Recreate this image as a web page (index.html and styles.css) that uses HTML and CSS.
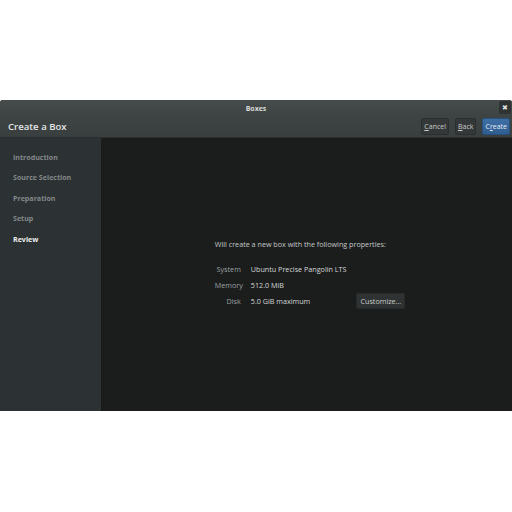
FILE: index.html
```html
<!DOCTYPE html>
<html>
<head>
<meta charset="utf-8">
<link rel="stylesheet" href="styles.css">
</head>
<body>
<div class="page">
  <div class="window">
    <div class="titlebar">
      <span class="title">Boxes</span>
      <span class="close">&#x2716;</span>
    </div>
    <div class="header">
      <span class="header-title">Create a Box</span>
      <div class="actions">
        <button class="btn"><u>C</u>ancel</button>
        <button class="btn"><u>B</u>ack</button>
        <button class="btn primary">C<u>r</u>eate</button>
      </div>
    </div>
    <div class="main">
      <nav class="sidebar">
        <div class="step">Introduction</div>
        <div class="step">Source Selection</div>
        <div class="step">Preparation</div>
        <div class="step">Setup</div>
        <div class="step active">Review</div>
      </nav>
      <section class="content">
        <div class="summary">
          <p class="intro">Will create a new box with the following properties:</p>
          <div class="props">
            <span class="label">System</span><span class="value">Ubuntu Precise Pangolin LTS</span><span></span>
            <span class="label">Memory</span><span class="value">512.0 MiB</span><span></span>
            <span class="label">Disk</span><span class="value">5.0 GiB maximum</span><button class="btn small">Customize…</button>
          </div>
        </div>
      </section>
    </div>
  </div>
</div>
</body>
</html>
```
FILE: styles.css
```css
html, body {
  margin: 0;
  padding: 0;
  background: #ffffff;
}
.page {
  width: 512px;
  height: 512px;
  padding-top: 100px;
  box-sizing: border-box;
  font-family: "Open Sans", "DejaVu Sans", sans-serif;
}
.window {
  display: flex;
  flex-direction: column;
  height: 311px;
  border-radius: 3px 3px 0 0;
  overflow: hidden;
  background: #1b1d1d;
}
.titlebar {
  position: relative;
  height: 16px;
  background: linear-gradient(#464c4c, #3e4343);
  display: flex;
  align-items: center;
  justify-content: center;
}
.title {
  color: #d8dada;
  font-size: 7px;
  font-weight: 700;
}
.close {
  position: absolute;
  right: 1px;
  top: 1px;
  width: 12px;
  height: 13px;
  border-radius: 2px;
  background: #2e3232;
  color: #e0e2e2;
  font-size: 7px;
  display: flex;
  align-items: center;
  justify-content: center;
}
.header {
  height: 21px;
  background: linear-gradient(#3e4343, #393e3e);
  display: flex;
  align-items: center;
  justify-content: space-between;
  padding: 0 2px 0 8px;
  border-bottom: 1px solid #2a2e2e;
}
.header-title {
  color: #e4e6e6;
  font-size: 9.6px;
  font-weight: 600;
}
.actions {
  display: flex;
  gap: 6px;
}
.btn {
  font-family: inherit;
  font-size: 7px;
  color: #c9cccc;
  background: #343838;
  border: 1px solid #2a2e2e;
  border-radius: 2px;
  height: 17px;
  padding: 0 2px;
  margin: 0;
}
.btn u {
  text-decoration: underline;
}
.btn.primary {
  background: linear-gradient(#3d6fa6, #305d8f);
  border-color: #27507e;
  color: #e6eef7;
}
.main {
  flex: 1;
  display: flex;
}
.sidebar {
  width: 102px;
  background: #2c3133;
  padding-top: 14px;
  box-sizing: border-box;
  display: flex;
  flex-direction: column;
  gap: 9px;
  border-right: 1px solid #1a1c1c;
}
.step {
  padding-left: 13px;
  color: #82888a;
  font-size: 7.1px;
  font-weight: 700;
  line-height: 11.4px;
}
.step.active {
  color: #eeeeee;
}
.content {
  flex: 1;
  background: #1b1d1d;
  display: flex;
  align-items: center;
  justify-content: center;
  padding-left: 6px;
  padding-bottom: 2px;
}
.summary {
  color: #c4c8c8;
  font-size: 7.2px;
}
.intro {
  margin: 0 0 12px 0;
  line-height: 10px;
}
.props {
  display: grid;
  grid-template-columns: 26px auto auto;
  grid-auto-rows: 16px;
  column-gap: 10px;
  align-items: center;
}
.label {
  text-align: right;
  color: #9ba0a0;
}
.value {
  color: #d4d7d7;
}
.btn.small {
  height: 16px;
  font-size: 7.2px;
  padding: 0 3px;
  justify-self: start;
  margin-left: 0;
  background: #2e3232;
  border-color: #262a2a;
}
```
